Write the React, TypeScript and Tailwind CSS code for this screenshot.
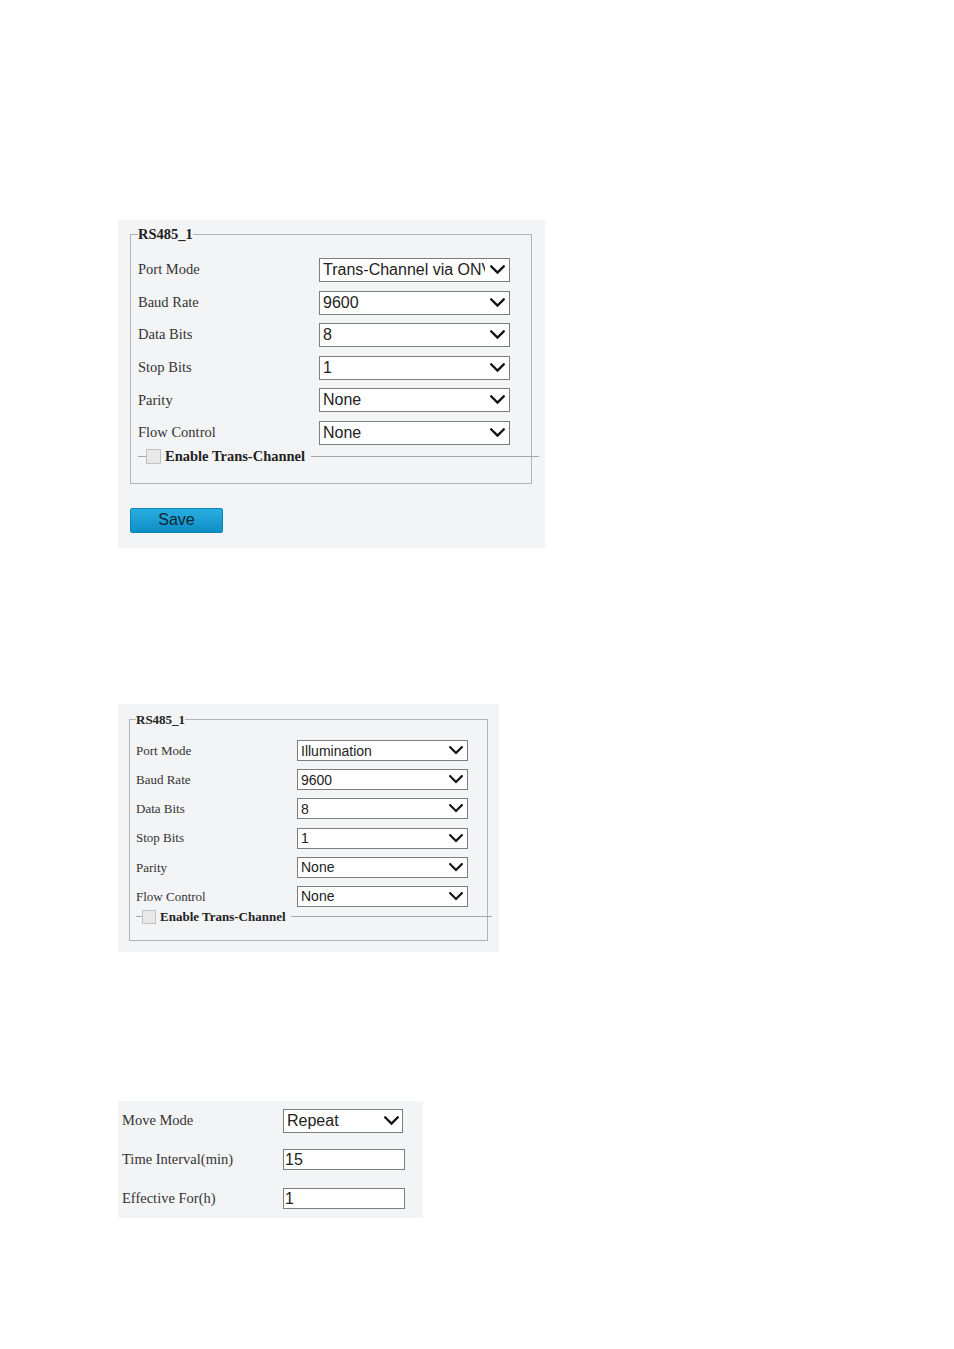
import React from 'react';

const serif = "font-['Liberation_Serif','Times_New_Roman',serif]";
const sans = "font-['Liberation_Sans',Arial,sans-serif]";

const Chevron: React.FC<{ w: number; h: number }> = ({ w, h }) => (
    <svg width={w} height={h} viewBox="0 0 14 9" className="shrink-0">
        <polyline points="1.2,1.2 7,7 12.8,1.2" fill="none" stroke="#111" strokeWidth="2.2" strokeLinecap="square" />
    </svg>
);

const bigRows = [
    ['Port Mode', "Trans-Channel via ONVIF"],
    ['Baud Rate', '9600'],
    ['Data Bits', '8'],
    ['Stop Bits', '1'],
    ['Parity', 'None'],
    ['Flow Control', 'None'],
];

const smallRows = [
    ['Port Mode', 'Illumination'],
    ['Baud Rate', '9600'],
    ['Data Bits', '8'],
    ['Stop Bits', '1'],
    ['Parity', 'None'],
    ['Flow Control', 'None'],
];

export default function App() {
    return (
        <div className="min-h-[1349px] w-[954px] bg-white pl-[118px] pt-[220px]">

            {/* RS485 panel with save */}
            <div className="w-[427px] h-[328px] bg-[#f3f4f6] pt-[6px] pl-[12px]">
                <fieldset className="w-[402px] border border-[#b3b3b3] pl-[7px] pt-[16px] pb-[18px]">
                    <legend className={`${serif} text-[14.5px] leading-[16px] font-bold text-[#222]`}>RS485_1</legend>
                    <div className="flex flex-col gap-[8.6px]">
                        {bigRows.map(([label, value]) => (
                            <div key={label} className="flex items-center h-[24px]">
                                <span className={`${serif} w-[181px] text-[14.5px] text-[#333]`}>{label}</span>
                                <div className="w-[191px] h-[24px] bg-white border border-[#7d7d7d] flex items-center pl-[3px] pr-[4px] overflow-hidden">
                                    <span className={`${sans} flex-1 min-w-0 mr-[5px] text-[16px] leading-[20px] text-[#222] whitespace-nowrap overflow-hidden`}>{value}</span>
                                    <Chevron w={15} h={10} />
                                </div>
                            </div>
                        ))}
                    </div>
                    <div className="flex items-center h-[16px] mt-[4px] -mr-[8px]">
                        <div className="w-[8px] h-px bg-[#a9a9a9]" />
                        <div className="w-[15px] h-[15px] bg-[#e8e8e8] border border-[#c2c2c2]" />
                        <span className={`${serif} ml-[4px] text-[14.5px] font-bold text-[#222] whitespace-nowrap`}>Enable Trans-Channel</span>
                        <div className="flex-1 h-px bg-[#a9a9a9] ml-[6px]" />
                    </div>
                </fieldset>
                <button className={`${sans} mt-[24px] w-[93px] h-[25px] rounded-[2px] border border-[#0a86ba] bg-gradient-to-b from-[#29aee0] to-[#0b8ec6] text-[16px] leading-[20px] text-[#0d2533]`}>
                    Save
                </button>
            </div>

            {/* RS485 panel, illumination */}
            <div className="mt-[156px] w-[381px] h-[248px] bg-[#f3f4f6] pt-[8px] pl-[11px]">
                <fieldset className="w-[359px] border border-[#b3b3b3] pl-[6px] pt-[13px] pb-[16px]">
                    <legend className={`${serif} text-[13px] leading-[15px] font-bold text-[#222]`}>RS485_1</legend>
                    <div className="flex flex-col gap-[8.2px]">
                        {smallRows.map(([label, value]) => (
                            <div key={label} className="flex items-center h-[21px]">
                                <span className={`${serif} w-[161px] text-[13px] text-[#333]`}>{label}</span>
                                <div className="w-[171px] h-[21px] bg-white border border-[#7d7d7d] flex items-center pl-[3px] pr-[4px]">
                                    <span className={`${sans} flex-1 min-w-0 text-[14px] leading-[18px] text-[#222] whitespace-nowrap`}>{value}</span>
                                    <Chevron w={14} h={9} />
                                </div>
                            </div>
                        ))}
                    </div>
                    <div className="flex items-center h-[14px] mt-[3px] -mr-[5px]">
                        <div className="w-[6px] h-px bg-[#a9a9a9]" />
                        <div className="w-[14px] h-[14px] bg-[#e8e8e8] border border-[#c2c2c2]" />
                        <span className={`${serif} ml-[4px] text-[13px] font-bold text-[#222] whitespace-nowrap`}>Enable Trans-Channel</span>
                        <div className="flex-1 h-px bg-[#a9a9a9] ml-[5px]" />
                    </div>
                </fieldset>
            </div>

            {/* Move mode panel */}
            <div className="mt-[149px] w-[305px] h-[117px] bg-[#f3f4f6] pl-[4px] flex flex-col">
                <div className="flex items-center h-[39px]">
                    <span className={`${serif} w-[161px] text-[14.5px] text-[#333]`}>Move Mode</span>
                    <div className="w-[120px] h-[24px] bg-white border border-[#7d7d7d] flex items-center pl-[3px] pr-[3px]">
                        <span className={`${sans} flex-1 text-[16px] leading-[20px] text-[#222]`}>Repeat</span>
                        <Chevron w={15} h={10} />
                    </div>
                </div>
                <div className="flex items-center h-[39px]">
                    <span className={`${serif} w-[161px] text-[14.5px] text-[#333]`}>Time Interval(min)</span>
                    <div className={`${sans} w-[122px] h-[21px] bg-white border border-[#7d7d7d] pl-[1px] text-[16px] leading-[19px] text-[#222]`}>15</div>
                </div>
                <div className="flex items-center h-[39px]">
                    <span className={`${serif} w-[161px] text-[14.5px] text-[#333]`}>Effective For(h)</span>
                    <div className={`${sans} w-[122px] h-[21px] bg-white border border-[#7d7d7d] pl-[1px] text-[16px] leading-[19px] text-[#222]`}>1</div>
                </div>
            </div>
        </div>
    );
}
